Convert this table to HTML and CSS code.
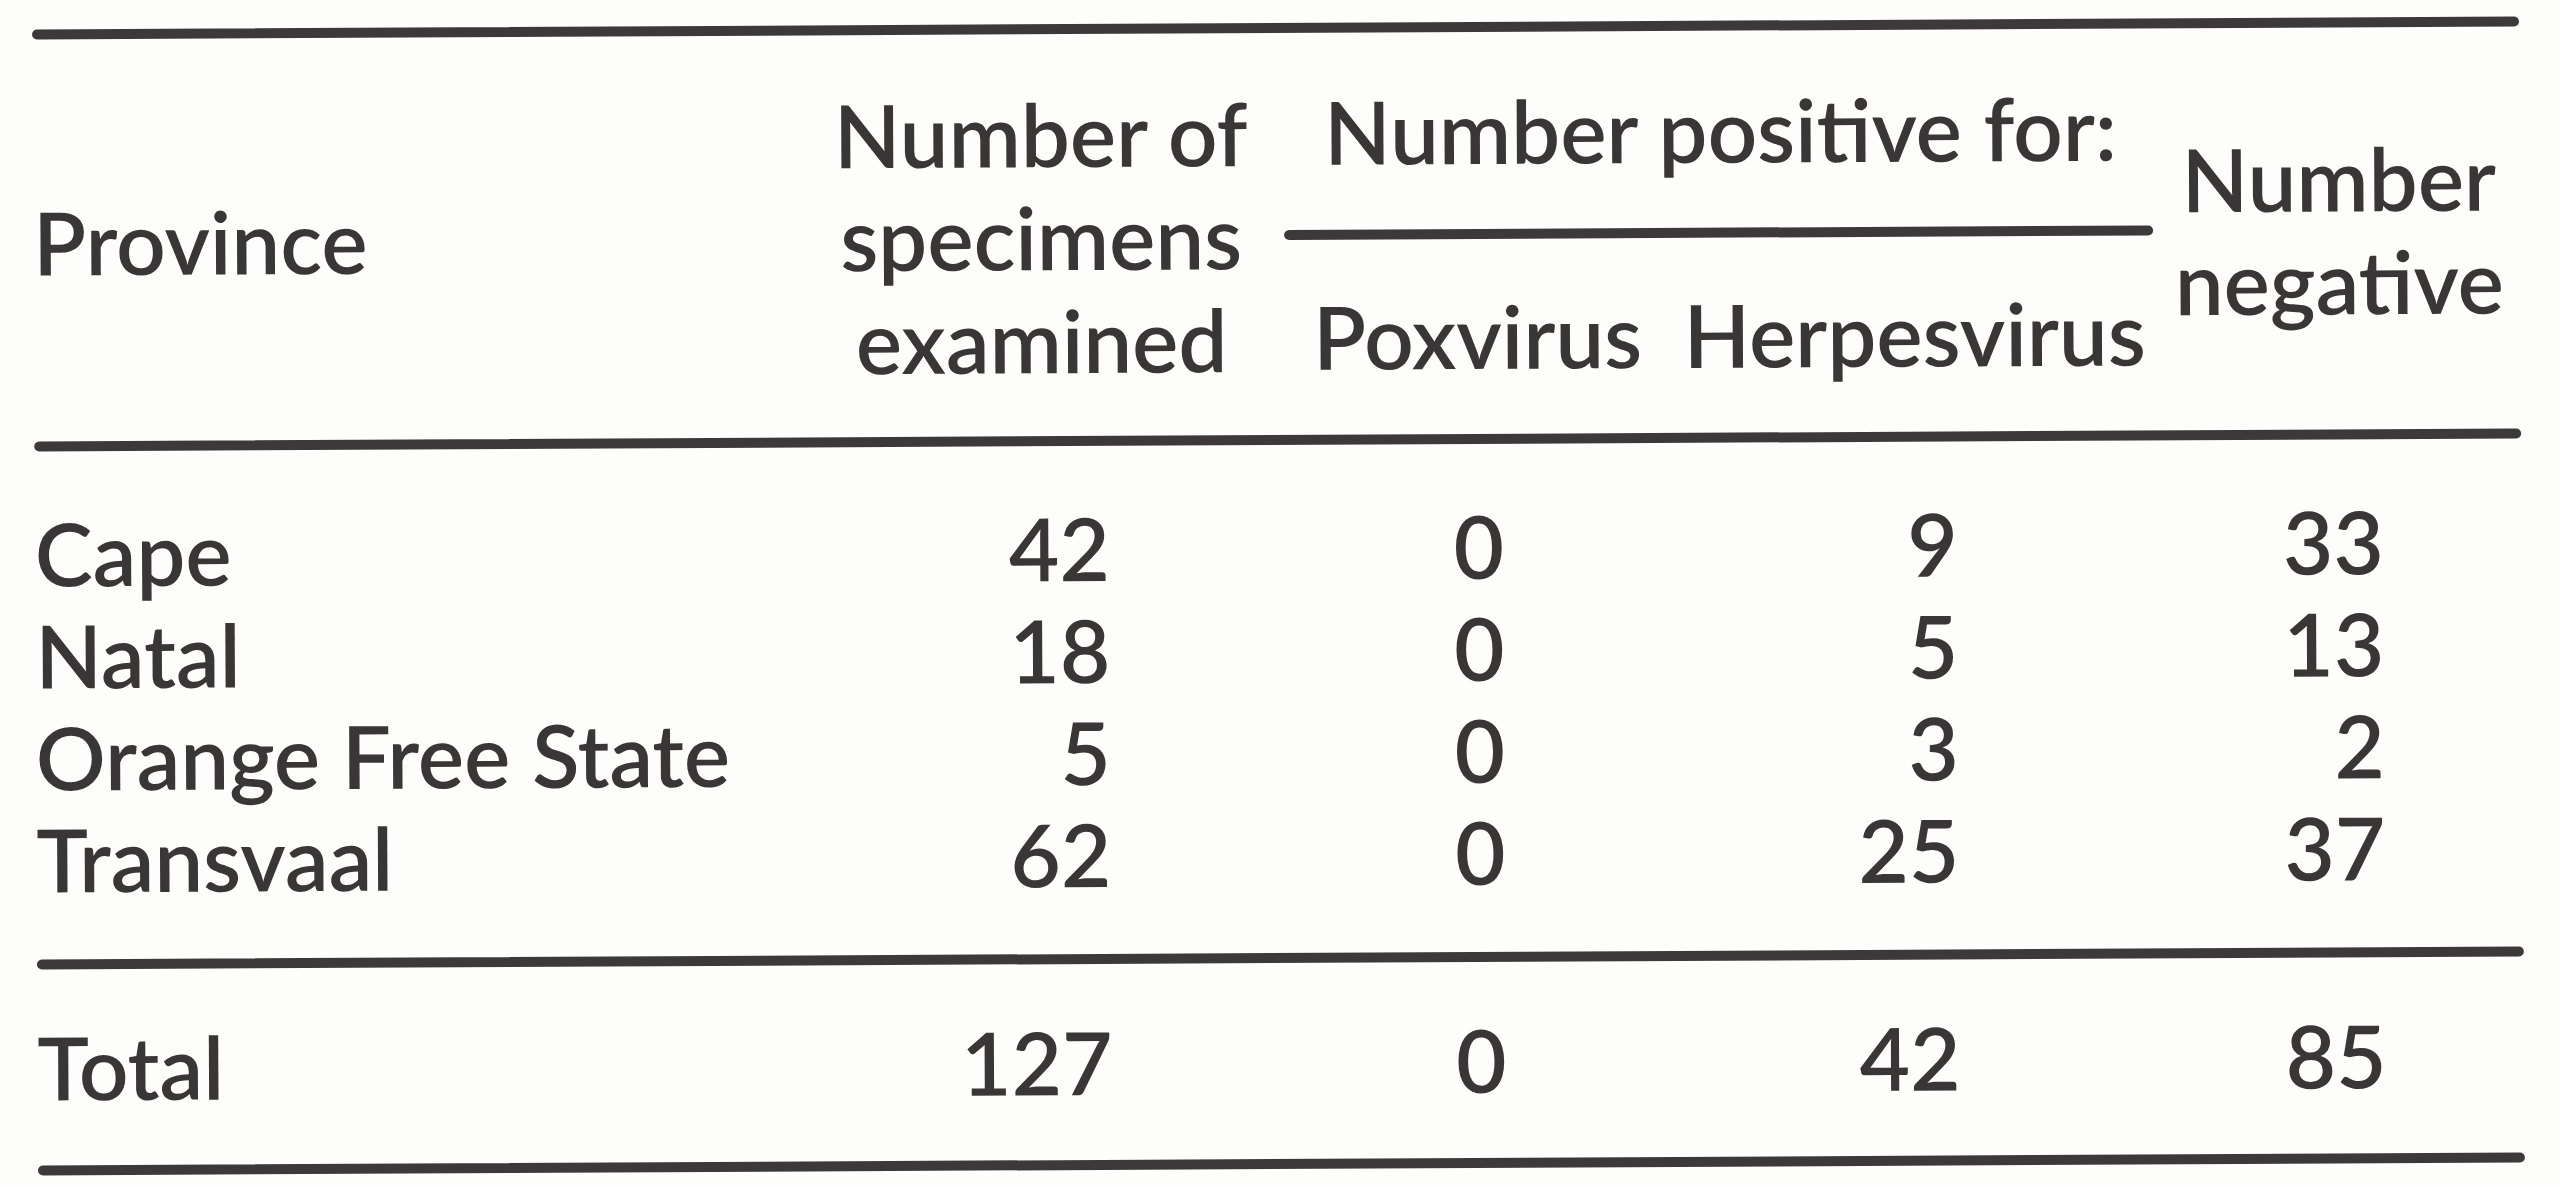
FILE: index.html
```html
<!DOCTYPE html>
<html lang="en">
<head>
<meta charset="utf-8">
<title>Specimens by province</title>
<link rel="stylesheet" href="styles.css">
</head>
<body>
<div class="page">
  <div class="table">
    <div class="rule"></div>
    <div class="head">
      <div class="h-prov">Province</div>
      <div class="h-spec">
        <div class="line">Number of</div>
        <div class="line">specimens</div>
        <div class="line">examined</div>
      </div>
      <div class="h-pos">
        <div class="line">Number positive for:</div>
        <div class="rule mid"></div>
        <div class="h-pos-sub">
          <div class="line h-pox">Poxvirus</div>
          <div class="line h-herp">Herpesvirus</div>
        </div>
      </div>
      <div class="h-neg">
        <div class="line">Number</div>
        <div class="line">negative</div>
      </div>
    </div>
    <div class="rule"></div>
    <div class="body">
      <div class="row">
        <div class="c-a">Cape</div><div class="c-b">42</div><div class="c-c">0</div><div class="c-d">9</div><div class="c-e">33</div>
      </div>
      <div class="row">
        <div class="c-a">Natal</div><div class="c-b">18</div><div class="c-c">0</div><div class="c-d">5</div><div class="c-e">13</div>
      </div>
      <div class="row">
        <div class="c-a">Orange Free State</div><div class="c-b">5</div><div class="c-c">0</div><div class="c-d">3</div><div class="c-e">2</div>
      </div>
      <div class="row">
        <div class="c-a">Transvaal</div><div class="c-b">62</div><div class="c-c">0</div><div class="c-d">25</div><div class="c-e">37</div>
      </div>
    </div>
    <div class="rule"></div>
    <div class="total">
      <div class="row">
        <div class="c-a">Total</div><div class="c-b">127</div><div class="c-c">0</div><div class="c-d">42</div><div class="c-e">85</div>
      </div>
    </div>
    <div class="rule"></div>
  </div>
</div>
</body>
</html>
```

FILE: styles.css
```css
html, body {
  margin: 0;
  padding: 0;
  background: #fdfdfb;
}

.page {
  width: 2560px;
  height: 1185px;
  padding: 23px 0 0 35px;
  box-sizing: border-box;
  overflow: hidden;
}

.table {
  width: 2487px;
  font-family: Lato, "Open Sans", sans-serif;
  font-size: 87px;
  font-weight: 600;
  color: #3a3536;
  transform: rotate(-0.3deg);
  transform-origin: 50% 50%;
}

.rule {
  height: 10px;
  border-radius: 5px;
  background: #3d393a;
}

.head {
  display: grid;
  grid-template-columns: 765px 486px 874px 362px;
  padding-bottom: 45px;
}

.line {
  line-height: 103px;
  white-space: nowrap;
}

.h-prov {
  padding-top: 151px;
  line-height: 103px;
}

.h-spec {
  padding-top: 48px;
  text-align: center;
}

.h-pos {
  padding-top: 47px;
  text-align: center;
}

.mid {
  margin: 47px 5px 45px 0;
  height: 10px;
}

.h-pos-sub {
  display: grid;
  grid-template-columns: 386px 488px;
}

.h-neg {
  padding-top: 99px;
  text-align: center;
}

.body {
  padding: 51px 0 49px;
}

.total {
  padding: 47px 0 47px;
}

.row {
  display: grid;
  grid-template-columns: 765px 486px 386px 488px 362px;
  line-height: 102px;
  white-space: nowrap;
}

.c-a { text-align: left; }
.c-b { text-align: right; padding-right: 176px; }
.c-c { text-align: center; }
.c-d { text-align: right; padding-right: 202px; }
.c-e { text-align: right; padding-right: 138px; }
```
